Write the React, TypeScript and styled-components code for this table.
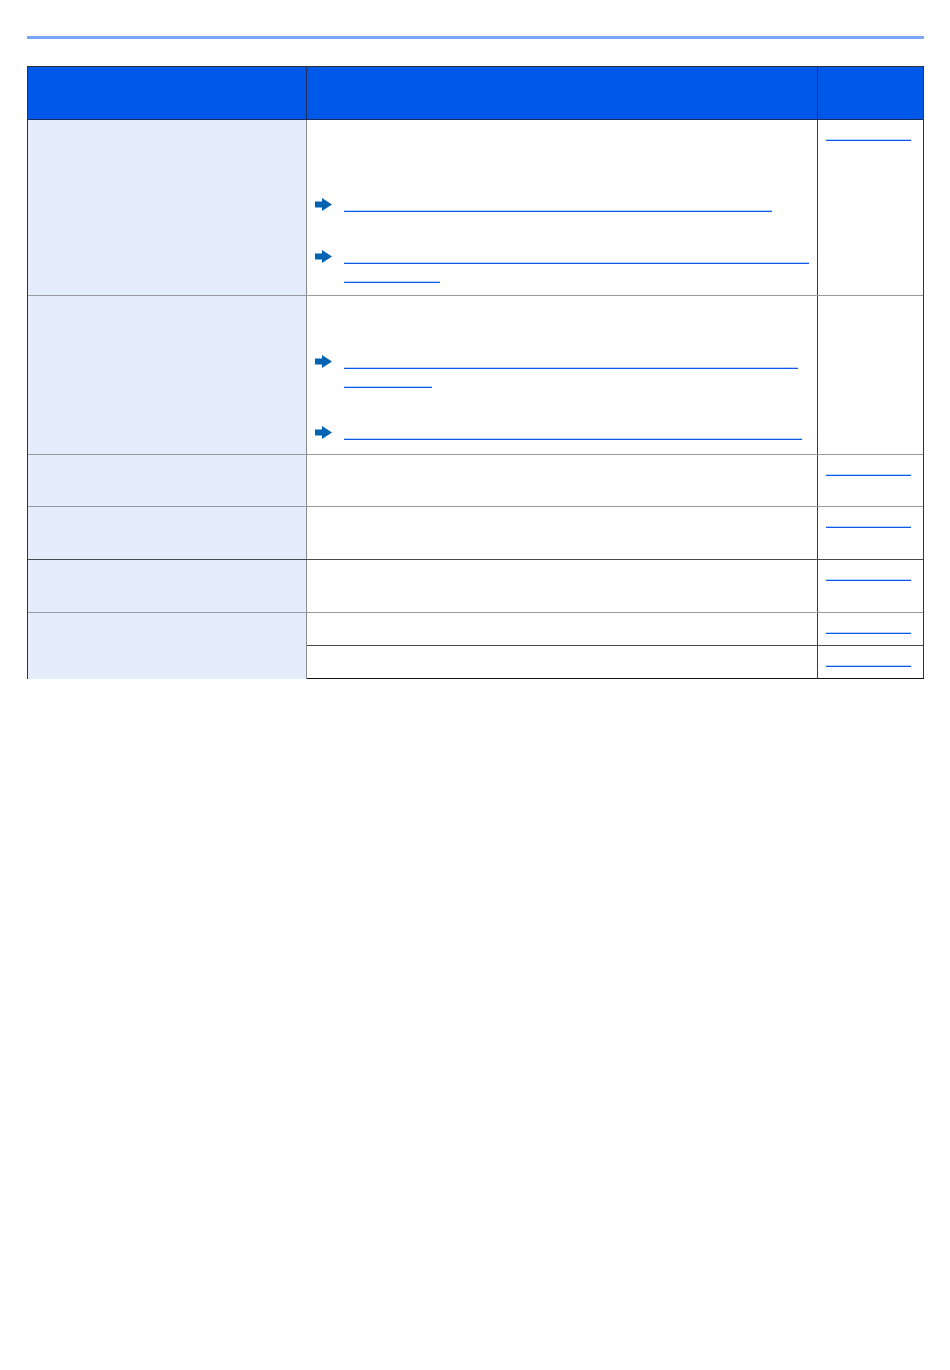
import styled, { createGlobalStyle } from 'styled-components'

const GlobalStyle = createGlobalStyle`
    body {
        margin: 0;
        background: #ffffff;
        font-family: "Liberation Sans", Arial, sans-serif;
    }
`

interface LinkLine {
    width: number
}

interface RefItem {
    lines: number[]
}

interface RowData {
    height: number
    line: string
    descLines: number
    refs: RefItem[]
    pageLink: boolean
}

const rows: RowData[] = [
    { height: 176, line: '#9a9a9a', descLines: 2, refs: [{ lines: [428] }, { lines: [465, 96] }], pageLink: true },
    { height: 159, line: '#9a9a9a', descLines: 1, refs: [{ lines: [454, 88] }, { lines: [458] }], pageLink: false },
    { height: 52, line: '#9a9a9a', descLines: 0, refs: [], pageLink: true },
    { height: 53, line: '#4a4a4a', descLines: 0, refs: [], pageLink: true },
    { height: 53, line: '#9a9a9a', descLines: 0, refs: [], pageLink: true },
    { height: 33, line: '#4a4a4a', descLines: 0, refs: [], pageLink: true },
    { height: 32, line: 'transparent', descLines: 0, refs: [], pageLink: true },
]

const Arrow = () => (
    <ArrowSvg width="17" height="13" viewBox="0 0 17 13">
        <rect x="0" y="3.5" width="8" height="6" fill="#0062b1" />
        <polygon points="7,0 17,6.5 7,13" fill="#0062b1" />
    </ArrowSvg>
)

const Underline = ({ width }: LinkLine) => (
    <TextLine>
        <LinkRule style={{ width }} />
    </TextLine>
)

const App = () => {
    return (
        <>
            <GlobalStyle />
            <Page>
                <TopRule />
                <Table>
                    <HeaderRow>
                        <HeaderCell />
                        <HeaderCell />
                        <HeaderCell last />
                    </HeaderRow>
                    {
                        rows.map((row, index) => {
                            return (
                                <Row key={index} h={row.height} line={row.line}>
                                    <NameCell />
                                    <DescCell>
                                        {
                                            row.descLines > 0 &&
                                            <Block>
                                                {Array.from({ length: row.descLines }).map((_, i) => <TextLine key={i} />)}
                                            </Block>
                                        }
                                        {
                                            row.refs.map((ref, i) => {
                                                return (
                                                    <RefBlock key={i}>
                                                        <Arrow />
                                                        <RefLines>
                                                            {ref.lines.map((w, j) => <Underline key={j} width={w} />)}
                                                        </RefLines>
                                                    </RefBlock>
                                                )
                                            })
                                        }
                                    </DescCell>
                                    <PageCell>
                                        {row.pageLink && <Underline width={85} />}
                                    </PageCell>
                                </Row>
                            )
                        })
                    }
                </Table>
            </Page>
        </>
    )
}
export default App


const Page = styled.div`
    padding: 36px 0 0 27px;
    width: 897px;
`
const TopRule = styled.div`
    height: 3px;
    width: 897px;
    background-color: #7aa7f5;
    margin-bottom: 27px;
`
const Table = styled.div`
    width: 897px;
    box-sizing: border-box;
    border: 1px solid #333333;
    border-bottom-color: #111111;
`
const HeaderRow = styled.div`
    display: grid;
    grid-template-columns: 279px 511px 105px;
    height: 53px;
    box-sizing: border-box;
    background-color: #0058e8;
    border-bottom: 1px solid #1d2d5c;
`
const HeaderCell = styled.div<{ last?: boolean }>`
    box-sizing: border-box;
    border-right: ${({ last }) => (last ? 'none' : '1px solid #1d2d5c')};
`
const Row = styled.div<{ h: number; line: string }>`
    display: grid;
    grid-template-columns: 279px 511px 105px;
    height: ${({ h }) => h}px;
    box-sizing: border-box;
    border-bottom: 1px solid ${({ line }) => line};
`
const NameCell = styled.div`
    box-sizing: border-box;
    background-color: #e5ecfb;
    border-right: 1px solid #8c8c8c;
`
const DescCell = styled.div`
    box-sizing: border-box;
    display: flex;
    flex-direction: column;
    gap: 33px;
    padding: 6px 8px 0 8px;
    border-right: 1px solid #3a3a3a;
`
const PageCell = styled.div`
    box-sizing: border-box;
    padding: 6px 8px 0 8px;
`
const Block = styled.div`
    display: flex;
    flex-direction: column;
`
const RefBlock = styled.div`
    display: flex;
    align-items: flex-start;
    gap: 12px;
`
const ArrowSvg = styled.svg`
    flex: none;
    margin-top: 1px;
    display: block;
`
const RefLines = styled.div`
    display: flex;
    flex-direction: column;
`
const TextLine = styled.div`
    height: 19px;
    font-size: 14px;
    line-height: 19px;
`
const LinkRule = styled.div`
    height: 1px;
    margin-top: 14px;
    background-color: #0b5be6;
    box-shadow: 0 -1px 0 rgba(90, 150, 245, 0.45);
`
